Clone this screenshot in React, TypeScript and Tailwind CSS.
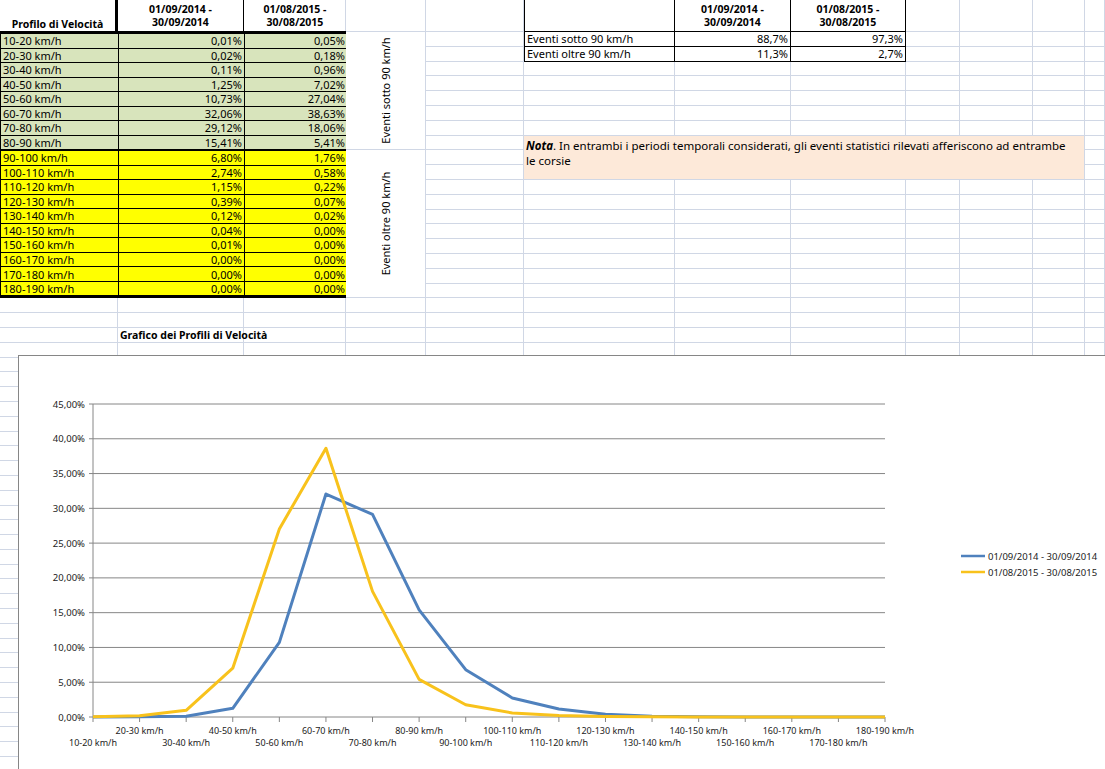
import React from 'react';

const colW = [118, 126, 102, 80, 98, 151, 116, 115, 54, 73, 52, 20];
const ROWS = 52;

const speeds = [
  ['10-20 km/h', 0.01, 0.05], ['20-30 km/h', 0.02, 0.18], ['30-40 km/h', 0.11, 0.96],
  ['40-50 km/h', 1.25, 7.02], ['50-60 km/h', 10.73, 27.04], ['60-70 km/h', 32.06, 38.63],
  ['70-80 km/h', 29.12, 18.06], ['80-90 km/h', 15.41, 5.41], ['90-100 km/h', 6.8, 1.76],
  ['100-110 km/h', 2.74, 0.58], ['110-120 km/h', 1.15, 0.22], ['120-130 km/h', 0.39, 0.07],
  ['130-140 km/h', 0.12, 0.02], ['140-150 km/h', 0.04, 0.0], ['150-160 km/h', 0.01, 0.0],
  ['160-170 km/h', 0.0, 0.0], ['170-180 km/h', 0.0, 0.0], ['180-190 km/h', 0.0, 0.0],
] as [string, number, number][];

const pct = (v: number) => v.toFixed(2).replace('.', ',') + '%';

function Chart() {
  const x0 = 74, x1 = 866, y0 = 48, y1 = 361;
  const step = (x1 - x0) / 17;
  const y = (v: number) => y1 - (v / 45) * (y1 - y0);
  const line = (i: 1 | 2) => speeds.map((s, k) => `${x0 + k * step},${y(s[i])}`).join(' ');
  return (
    <svg width="1087" height="414" className="block">
      {Array.from({ length: 10 }).map((_, k) => {
        const v = k * 5;
        return (
          <g key={k}>
            <line x1={x0 - 4} x2={x1} y1={y(v)} y2={y(v)} stroke="#868686" strokeWidth="1" />
            <text x={x0 - 8} y={y(v) + 3.5} textAnchor="end" fontSize="9.5" fill="#222">
              {v.toFixed(2).replace('.', ',')}%
            </text>
          </g>
        );
      })}
      <line x1={x0} x2={x0} y1={y0} y2={y1} stroke="#868686" />
      {speeds.map((s, k) => (
        <g key={s[0]}>
          <line x1={x0 + k * step} x2={x0 + k * step} y1={y1} y2={y1 + 5} stroke="#868686" />
          <text x={x0 + k * step} y={k % 2 ? y1 + 17 : y1 + 29} textAnchor="middle" fontSize="9" fill="#222">
            {s[0]}
          </text>
        </g>
      ))}
      <polyline points={line(1)} fill="none" stroke="#4f81bd" strokeWidth="3" strokeLinejoin="round" />
      <polyline points={line(2)} fill="none" stroke="#f8c21c" strokeWidth="3" strokeLinejoin="round" />
      <line x1="942" x2="966" y1="200" y2="200" stroke="#4f81bd" strokeWidth="2.5" />
      <text x="969" y="203.5" fontSize="9.5" fill="#222">01/09/2014 - 30/09/2014</text>
      <line x1="942" x2="966" y1="216" y2="216" stroke="#f8c21c" strokeWidth="2.5" />
      <text x="969" y="219.5" fontSize="9.5" fill="#222">01/08/2015 - 30/08/2015</text>
    </svg>
  );
}

const hdr = 'flex flex-col items-center justify-center font-bold text-[10.5px] leading-[13px]';

export default function App() {
  const cells: React.ReactNode[] = [];
  for (let r = 0; r < ROWS; r++)
    for (let c = 0; c < colW.length; c++)
      cells.push(
        <div key={`g${r}-${c}`} className="border-r border-b border-[#d0d7e5]" style={{ gridRow: r + 1, gridColumn: c + 1 }} />
      );

  return (
    <div className="relative w-[1105px] h-[769px] overflow-hidden bg-white text-[11px] leading-none text-black font-['Open_Sans','Liberation_Sans',sans-serif]">
      <div className="grid grid-cols-[118px_126px_102px_80px_98px_151px_116px_115px_54px_73px_52px_20px] grid-rows-[32px_repeat(51,14.8px)]">
        {cells}
        {/* left table header */}
        <div className="row-[1] col-[1] border-r-[3px] border-b border-black flex items-end justify-center pb-0.5 font-bold text-[10.5px]">Profilo di Velocità</div>
        <div className={`row-[1] col-[2] border-r border-b border-black ${hdr}`}><span>01/09/2014 -</span><span>30/09/2014</span></div>
        <div className={`row-[1] col-[3] border-b border-black ${hdr}`}><span>01/08/2015 -</span><span>30/08/2015</span></div>
        {/* left table body */}
        <div className="row-[2/span_18] col-[1/span_3] grid grid-cols-[118px_126px_102px] border-2 border-black -ml-px">
          {speeds.map((s, k) => {
            const bg = k < 8 ? 'bg-[#d8e4bc]' : 'bg-[#ffff00]';
            const sep = k === 7 ? 'border-b-2' : 'border-b';
            return (
              <React.Fragment key={s[0]}>
                <div className={`${bg} ${sep} border-r border-black pl-0.5 flex items-center`}>{s[0]}</div>
                <div className={`${bg} ${sep} border-r border-black pr-0.5 flex items-center justify-end`}>{pct(s[1])}</div>
                <div className={`${bg} ${sep} border-black pr-0.5 flex items-center justify-end`}>{pct(s[2])}</div>
              </React.Fragment>
            );
          })}
        </div>
        <div className="row-[2/span_8] col-[4] bg-white border-r border-b border-[#d0d7e5] flex items-center justify-center">
          <span className="-rotate-90 whitespace-nowrap">Eventi sotto 90 km/h</span>
        </div>
        <div className="row-[10/span_10] col-[4] bg-white border-r border-b border-[#d0d7e5] flex items-center justify-center">
          <span className="-rotate-90 whitespace-nowrap">Eventi oltre 90 km/h</span>
        </div>
        {/* right table */}
        <div className="row-[1] col-[6] bg-white border-x border-b border-black" />
        <div className={`row-[1] col-[7] bg-white border-r border-b border-black ${hdr}`}><span>01/09/2014 -</span><span>30/09/2014</span></div>
        <div className={`row-[1] col-[8] bg-white border-r border-b border-black ${hdr}`}><span>01/08/2015 -</span><span>30/08/2015</span></div>
        <div className="row-[2] col-[6] bg-white border-x border-b border-black pl-0.5 flex items-center">Eventi sotto 90 km/h</div>
        <div className="row-[2] col-[7] bg-white border-r border-b border-black pr-0.5 flex items-center justify-end">88,7%</div>
        <div className="row-[2] col-[8] bg-white border-r border-b border-black pr-0.5 flex items-center justify-end">97,3%</div>
        <div className="row-[3] col-[6] bg-white border-x border-b border-black pl-0.5 flex items-center">Eventi oltre 90 km/h</div>
        <div className="row-[3] col-[7] bg-white border-r border-b border-black pr-0.5 flex items-center justify-end">11,3%</div>
        <div className="row-[3] col-[8] bg-white border-r border-b border-black pr-0.5 flex items-center justify-end">2,7%</div>
        <div className="row-[9/span_3] col-[6/span_6] bg-[#fde9d9] border-r border-b border-[#d0d7e5] pl-0.5 pr-2 pt-0.5 text-[11.5px] leading-[15px]">
          <b><i>Nota</i></b>. In entrambi i periodi temporali considerati, gli eventi statistici rilevati afferiscono ad entrambe le corsie
        </div>
        <div className="row-[22] col-[2/span_2] flex items-center pl-0.5 font-bold text-[10.5px]">Grafico dei Profili di Velocità</div>
      </div>
      <div className="absolute left-[18px] top-[355px] bg-white border border-[#868686]">
        <Chart />
      </div>
    </div>
  );
}
